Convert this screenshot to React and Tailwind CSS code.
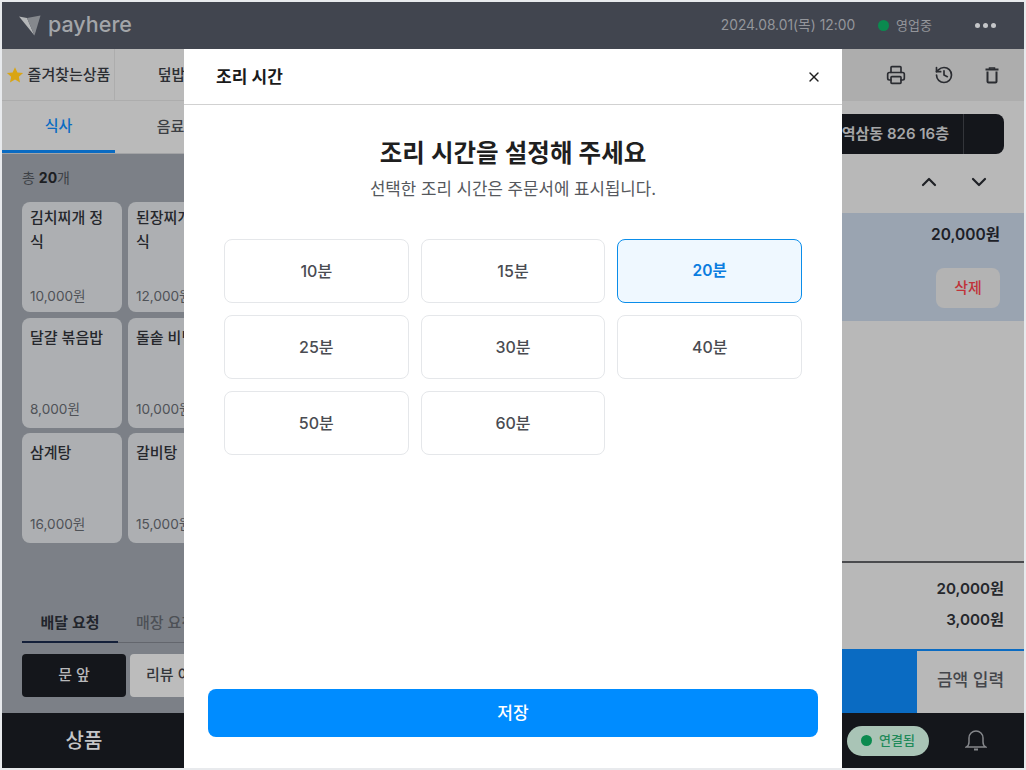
import React from "react";
import { Printer, History, ChevronUp, ChevronDown, X } from "lucide-react";

const cards = [
  [["김치찌개 정식", "10,000원"], ["된장찌개 정식", "12,000원"]],
  [["달걀 볶음밥", "8,000원"], ["돌솥 비빔밥", "10,000원"]],
  [["삼계탕", "16,000원"], ["갈비탕", "15,000원"]],
];
const times = ["10분", "15분", "20분", "25분", "30분", "40분", "50분", "60분"];

function Logo() {
  return (
    <svg width="22" height="21" viewBox="0 0 22 21">
      <path d="M0 1.5 L8 3 L15.5 20.5 Z" fill="#b4b6b8" />
      <path d="M8 3 L21.5 0.5 L15.5 20.5 Z" fill="#85888d" />
    </svg>
  );
}

function TrashIcon() {
  return (
    <svg width="20" height="20" viewBox="0 0 20 20" fill="none" stroke="currentColor" strokeWidth="2">
      <path d="M3.5 4.5h13" />
      <path d="M7.5 4.5V3h5v1.5" strokeWidth="1.5" />
      <path d="M5.5 6.5v10a1 1 0 0 0 1 1h7a1 1 0 0 0 1-1v-10" />
    </svg>
  );
}

function BellIcon() {
  return (
    <svg width="22" height="22" viewBox="0 0 22 22" fill="none" stroke="#85878b" strokeWidth="1.5" className="absolute right-[37px] bottom-[17px]">
      <path d="M1.5 18h19c-1.6-1-2.5-3-2.5-5V9a7 7 0 0 0-14 0v4c0 2-.9 4-2.5 5z" />
      <path d="M9 20.5h4" strokeWidth="2" />
    </svg>
  );
}

function Card({ name, price, tall }) {
  return (
    <div className={tall
      ? "w-[100px] shrink-0 h-[110px] rounded-[8px] bg-[#adafb2] pl-2 pr-[8px] pt-[4px] pb-[6px] flex flex-col justify-between"
      : "w-[100px] shrink-0 h-[110px] rounded-[8px] bg-[#adafb2] pl-2 pr-[8px] pt-[8px] pb-[9px] flex flex-col justify-between"}>
      <div className="text-[15px] leading-[24px] font-medium text-[#25272c] break-all">{name}</div>
      <div className="text-[13.6px] leading-[20px] text-[#4f5257]">{price}</div>
    </div>
  );
}

function Background() {
  return (
    <div className="absolute inset-0 flex flex-col bg-[#b8b8b8]">
      <header className="h-[47px] shrink-0 bg-[#41454f] flex items-center pl-[17px] pr-[28px]">
        <Logo />
        <span className="ml-[7px] text-[21.5px] font-medium text-[#a3a5a9] leading-none font-['Inter'] -mt-[1px]">payhere</span>
        <span className="ml-auto text-[13.8px] text-[#94969b]">2024.08.01(목) 12:00</span>
        <span className="ml-[23px] w-[11px] h-[11px] rounded-full bg-[#0b8a4f]"></span>
        <span className="ml-[7px] text-[13px] text-[#94969b]">영업중</span>
        <span className="ml-[43px] flex gap-[3px]">
          <i className="w-[5px] h-[5px] rounded-full bg-[#c4c6c9]"></i>
          <i className="w-[5px] h-[5px] rounded-full bg-[#c4c6c9]"></i>
          <i className="w-[5px] h-[5px] rounded-full bg-[#c4c6c9]"></i>
        </span>
      </header>
      <div className="flex-1 flex min-h-0">
        <div className="w-[500px] shrink-0 flex flex-col bg-[#7c8087]">
          <div className="h-[52px] flex bg-[#bababa] border-b border-[#adadad]">
            <div className="w-[113px] pt-[2px] flex items-center justify-center gap-[4px] border-r border-[#adadad] text-[15px] font-medium text-[#2c2e33]">
              <svg width="18" height="18" viewBox="0 0 24 24" className="shrink-0 -mt-[2px]"><path d="M12 1.5l3.2 7 7.6.8-5.7 5.1 1.6 7.6L12 18.1 5.3 22l1.6-7.6L1.2 9.3l7.6-.8z" fill="#d9a514" /></svg>
              <span className="whitespace-nowrap">즐겨찾는상품</span>
            </div>
            <div className="w-[113px] pt-[2px] flex items-center justify-center text-[15px] font-medium text-[#2c2e33]">덮밥</div>
          </div>
          <div className="h-[53px] flex bg-[#bababa] border-b border-[#a3a4a6]">
            <div className="w-[113px] pt-[2px] flex items-center justify-center border-b-[3px] border-[#0a6bc2] text-[15px] font-medium text-[#0a6bc2]">식사</div>
            <div className="w-[113px] pr-[2px] flex items-center justify-center text-[15px] font-medium text-[#3c3e43]">음료</div>
          </div>
          <div className="flex-1 pl-[20px] pt-[14px] flex flex-col">
            <div className="text-[14px] leading-[20px] text-[#3d4046]">총 <b className="font-bold text-[#1d1f23]">20</b>개</div>
            <div className="mt-[14px] flex flex-col gap-[5.5px]">
              {cards.map((row, i) => (
                <div key={i} className="flex gap-[6px]">
                  {row.map((c) => <Card key={c[0]} name={c[0]} price={c[1]} tall={i === 0} />)}
                </div>
              ))}
            </div>
            <div className="mt-[70px] flex h-[30px] border-b border-[#63666d] w-[400px]">
              <div className="w-[96px] h-[30px] text-center border-b-2 border-[#14203a] text-[15px] leading-[20px] font-semibold text-[#22252c]">배달 요청</div>
              <div className="ml-[18px] text-[15px] font-medium leading-[20px] text-[#4d5056]">매장 요청</div>
            </div>
            <div className="mt-[11px] flex gap-[4px]">
              <div className="w-[104px] h-[43px] rounded-[4px] bg-[#14161b] flex items-center justify-center text-[15px] font-medium text-[#b8b9bb]">문 앞</div>
              <div className="w-[120px] h-[43px] rounded-[4px] bg-[#bcbcbc] pl-[16px] flex items-center text-[15px] font-medium text-[#33353a]">리뷰 이벤트</div>
            </div>
          </div>
        </div>
        <div className="flex-1 flex flex-col min-w-0 bg-[#b8b8b8]">
          <div className="h-[52px] shrink-0 bg-[#adadad] flex items-center justify-end pr-[22px] gap-[28px] text-[#2a2c31]">
            <Printer size={20} strokeWidth={2} />
            <History size={20} strokeWidth={2} />
            <TrashIcon />
          </div>
          <div className="flex justify-end pr-[20px] pt-[13px]">
            <div className="w-[400px] h-[40px] rounded-[8px] bg-[#14161b] flex">
              <div className="flex-1 flex items-center justify-end pr-[14px] pt-[1px] border-r border-[#33353a] text-[15px] font-semibold text-[#a5a6a8]">서울시 강남구 역삼동 826 16층</div>
              <div className="w-[40px]"></div>
            </div>
          </div>
          <div className="flex justify-end pr-[33px] gap-[26px] mt-[16px] h-[24px] items-center text-[#1f2126]">
            <ChevronUp size={24} strokeWidth={2.2} />
            <ChevronDown size={24} strokeWidth={2.2} />
          </div>
          <div className="mt-[19px] h-[108px] bg-[#9aa4b1] pr-[24px] pt-[11px] flex flex-col items-end">
            <div className="text-[15.5px] leading-[22px] font-semibold text-[#1d2027]">20,000원</div>
            <div className="mt-[22px] pt-[1px] w-[64px] h-[40px] rounded-[8px] bg-[#b3b3b3] flex items-center justify-center text-[15px] font-medium text-[#c0333a]">삭제</div>
          </div>
          <div className="flex-1"></div>
          <div className="h-[88px] border-t-2 border-[#4a4b4e] pr-[20px] flex flex-col items-end pt-[15px] gap-[9px]">
            <div className="text-[15.2px] leading-[22px] font-semibold text-[#25272c]">20,000원</div>
            <div className="text-[15.2px] leading-[22px] font-semibold text-[#25272c]">3,000원</div>
          </div>
          <div className="h-[64px] shrink-0 flex border-t-2 border-[#0a6bc2]">
            <div className="flex-1 bg-[#0a6bc2]"></div>
            <div className="w-[107px] bg-[#b8b8b8] pb-[2px] flex items-center justify-center text-[17px] font-medium text-[#44464b]">금액 입력</div>
          </div>
        </div>
      </div>
      <footer className="h-[55px] shrink-0 bg-[#14161b] flex items-center">
        <div className="w-[164px] text-center text-[20px] font-medium text-[#c4c5c7]">상품</div>
        <div className="ml-auto mr-[95px] flex items-center justify-center gap-[7px] w-[82px] h-[30px] rounded-full bg-[#a9c4b6]">
          <span className="w-[11px] h-[11px] rounded-full bg-[#0b8a4f]"></span>
          <span className="text-[13px] font-medium text-[#1f8a5a]">연결됨</span>
        </div>
      </footer>
      <BellIcon />
    </div>
  );
}

export default function App() {
  return (
    <div className="w-[1026px] h-[770px] bg-[#e8eaed] p-[2px] font-['Inter','Noto_Sans_CJK_KR',sans-serif]">
      <div className="relative w-full h-full overflow-hidden">
        <Background />
        <div className="absolute left-[182px] top-[47px] w-[658px] h-[720px] bg-white flex flex-col">
          <div className="h-[56px] shrink-0 border-b border-[#d1d1d1] flex items-center justify-between pl-[32px] pr-[20px]">
            <span className="text-[17px] font-semibold text-[#1a1a1a] pt-[2px]">조리 시간</span>
            <X size={16} strokeWidth={2} className="text-[#1f1f1f]" />
          </div>
          <div className="flex-1 flex flex-col items-center pt-[30px]">
            <h2 className="text-[24.5px] leading-[36px] font-semibold text-[#1f1f1f]">조리 시간을 설정해 주세요</h2>
            <p className="mt-[6px] text-[16.8px] leading-[24px] text-[#55585d]">선택한 조리 시간은 주문서에 표시됩니다.</p>
            <div className="mt-[38px] w-[578px] grid grid-cols-3 gap-x-[12px] gap-y-[12px]">
              {times.map((t) => (
                <div key={t} className={t === "20분"
                  ? "h-[64px] rounded-[8px] border border-[#0a8dea] bg-[#eff8ff] flex items-center justify-center text-[15.5px] font-semibold text-[#0b7de0]"
                  : "h-[64px] rounded-[8px] border border-[#e5e7ea] bg-white flex items-center justify-center text-[16px] font-medium text-[#4a4c52]"}>{t}</div>
              ))}
            </div>
          </div>
          <div className="px-[24px] pb-[32px]">
            <div className="h-[48px] pt-[2px] rounded-[8px] bg-[#008cff] flex items-center justify-center text-[17px] font-medium text-white">저장</div>
          </div>
        </div>
      </div>
    </div>
  );
}
